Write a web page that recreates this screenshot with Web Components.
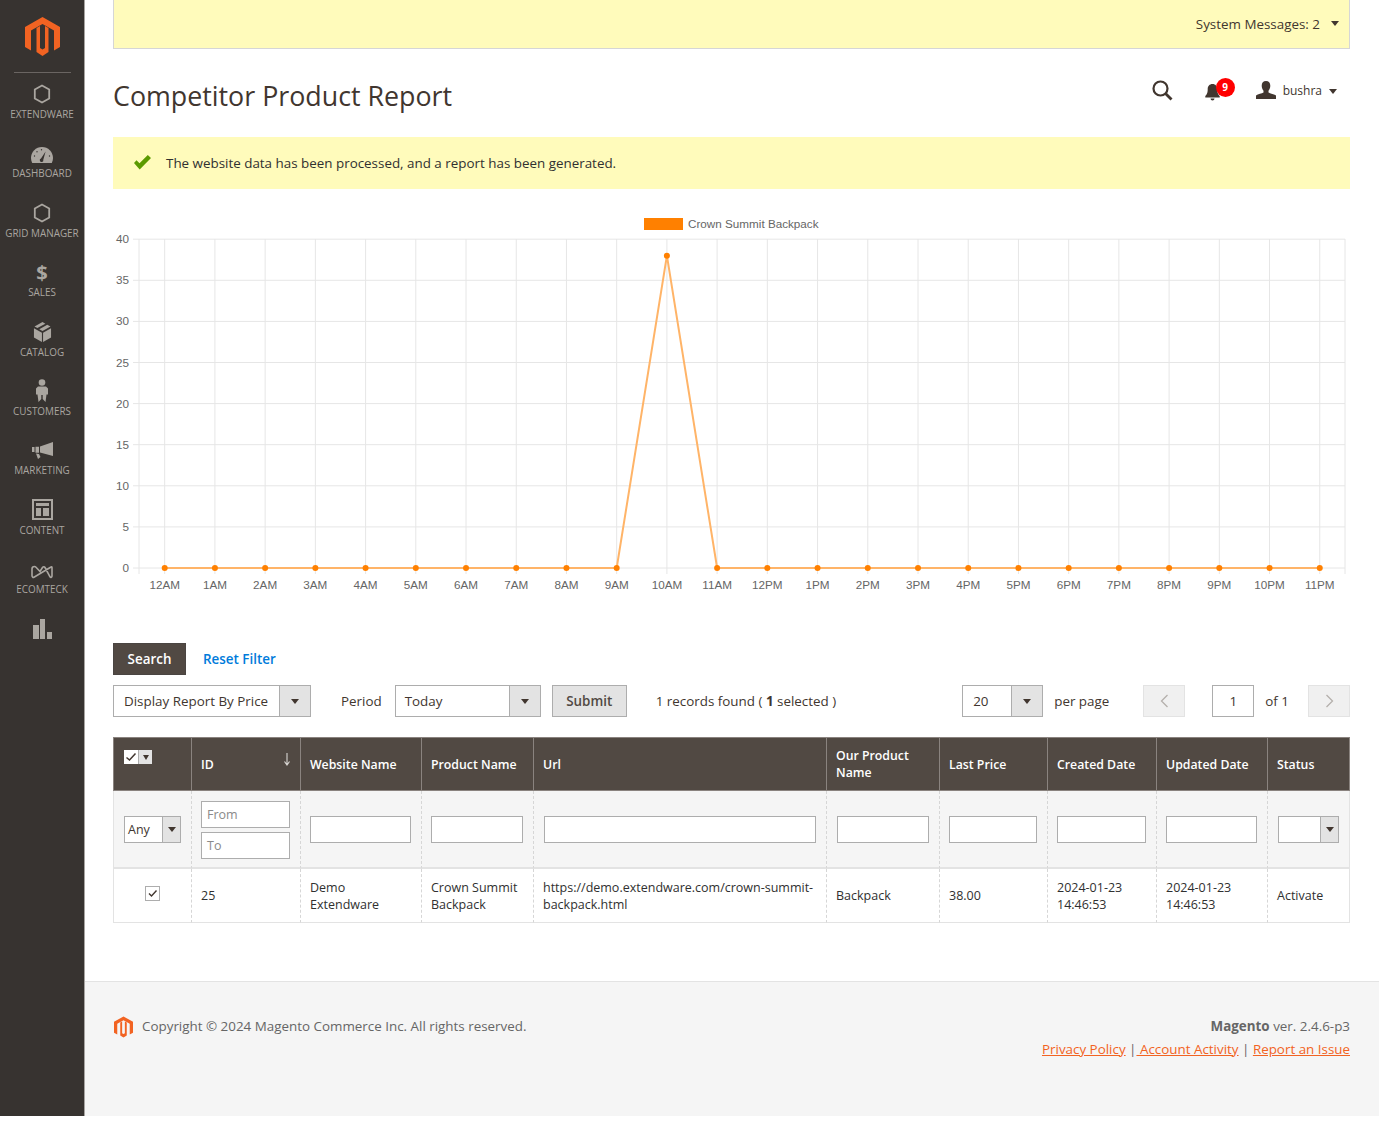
<!DOCTYPE html>
<html lang="en">
<head>
<meta charset="utf-8">
<title>Competitor Product Report</title>
<style>
html,body{margin:0;padding:0;background:#fff;}
body{width:1384px;height:1121px;overflow:hidden;font-family:"Open Sans","Liberation Sans",sans-serif;font-size:13.4px;color:#41362f;}
</style>
</head>
<body>
<ma-shell>
  <ma-sidebar slot="side">
    <ma-nav label="EXTENDWARE"><svg viewBox="0 0 20 22" width="18" height="20"><path d="M10 1.500l8 4.600v9.800l-8 4.600-8-4.600V6.100z" fill="none" stroke="currentColor" stroke-width="2"/></svg></ma-nav>
    <ma-nav label="DASHBOARD"><svg viewBox="0 0 22 16" width="22" height="16" style="margin-top:4px"><path d="M11 0C4.900 0 0 4.900 0 11c0 1.800.4 3.500 1.200 5h19.600c.8-1.500 1.200-3.200 1.200-5C22 4.900 17.100 0 11 0z" fill="currentColor"/><path d="M14.600 4.500L10 11.500a1.800 1.800 0 1 0 2.300 1.200z" fill="#373330"/><g fill="#373330"><circle cx="3.500" cy="9" r=".7"/><circle cx="6" cy="4.800" r=".7"/><circle cx="10.500" cy="2.800" r=".7"/><circle cx="18.500" cy="9" r=".7"/></g></svg></ma-nav>
    <ma-nav label="GRID MANAGER"><svg viewBox="0 0 20 22" width="18" height="20"><path d="M10 1.500l8 4.600v9.800l-8 4.600-8-4.600V6.100z" fill="none" stroke="currentColor" stroke-width="2"/></svg></ma-nav>
    <ma-nav label="SALES"><span style="font:700 20px/27px 'Open Sans',sans-serif">$</span></ma-nav>
    <ma-nav label="CATALOG"><svg viewBox="0 0 20 21" width="19" height="20"><path d="M1 6.500l8.400 4.700V21L1 16.200zM19 6.500l-8.400 4.700V21l8.400-4.800z" fill="currentColor"/><path d="M10 0l3 1.700-8.400 4.700-3-1.700zM15 2.800l3.400 1.900L10 9.500 6.600 7.600z" fill="currentColor"/></svg></ma-nav>
    <ma-nav label="CUSTOMERS"><svg viewBox="0 0 12 23" width="12" height="23"><circle cx="6" cy="3.500" r="3.300" fill="currentColor"/><path d="M2 7.500h8l2 2v6h-1.500L9.500 23 6.700 20V16H5.300v4L2.500 23l-1-7.500H0v-6z" fill="currentColor"/></svg></ma-nav>
    <ma-nav label="MARKETING"><svg viewBox="0 0 21 17" width="21" height="17"><path d="M21 0v14L8 10.500V4.500z" fill="currentColor"/><path d="M0 5h2.500v5H0zM3.500 4.700H7v6H3.500zM4 11.500l3 .6 1.500 3-2.500 1.900z" fill="currentColor"/></svg></ma-nav>
    <ma-nav label="CONTENT"><svg viewBox="0 0 21 21" width="21" height="21"><path d="M1 1h19v19H1z" fill="none" stroke="currentColor" stroke-width="2"/><path d="M4 4h13v3H4zM4 9h5v8H4zM11 9h6v8h-6z" fill="currentColor"/></svg></ma-nav>
    <ma-nav label="ECOMTECK"><svg viewBox="0 0 22 14" width="22" height="14" style="margin-top:6px"><path d="M3.500 1.500C2 1.500 1 2.500 1 4v6.500C1 12 2 12.700 3 12.300L20 2c.7-.5 1-.2 1 .7V11c0 1.200-1.200 2-2 .8L14 2.500c-.6-1.100-1.800-1.100-2.500 0L9 6.500 5 2.200c-.4-.4-.9-.7-1.500-.7z" fill="none" stroke="currentColor" stroke-width="1.600"/></svg></ma-nav>
    <ma-nav><svg viewBox="0 0 19 20" width="19" height="20"><path d="M0 6h6v14H0zM7 0h5v20H7zM14 13h5v7h-5z" fill="currentColor"/></svg></ma-nav>
  </ma-sidebar>
  <ma-sysbar>System Messages: 2</ma-sysbar>
  <ma-header user="bushra" count="9">Competitor Product Report</ma-header>
  <ma-message>The website data has been processed, and a report has been generated.</ma-message>
  <ma-chart></ma-chart>
  <ma-toolbar></ma-toolbar>
  <ma-grid></ma-grid>
  <ma-footer></ma-footer>
</ma-shell>

<script>
const LOGO = '<path d="M17.500 0L35 10v20l-6 3.500v-20L17.500 7 6 13.500v20L0 30V10z" fill="#f26322"/><path d="M11.500 11l3.500-2v22l2.500 1.500L20 31V9l3.500 2v24l-6 4-6-4z" fill="#f26322"/>';
function def(name, css, html, init){
  customElements.define(name, class extends HTMLElement{
    constructor(){super();const r=this.attachShadow({mode:'open'});
      r.innerHTML='<style>'+css+'</style>'+(typeof html==='function'?html(this):html);}
    connectedCallback(){
      const r=this.shadowRoot;
      if(typeof html==='function'&&!this._done){this._done=1;r.innerHTML='<style>'+css+'</style>'+html(this);}
      if(init)init(this,r);
    }
  });
}
def('ma-shell',`:host{display:grid;grid-template-columns:85px 1294px;width:1379px;height:1116px;}
  .side{margin:0}
  .main{display:flex;flex-direction:column;height:1116px;width:1294px;}`,
  `<div class="side"><slot name="side"></slot></div><div class="main"><slot></slot></div>`);

def('ma-sidebar',`:host{display:block;width:85px;height:1116px;box-sizing:border-box;background:#373330;border-right:1px solid #a7a4a1;}
  .logo{display:flex;justify-content:center;padding-top:17px;height:55px;box-sizing:content-box}
  hr{border:0;height:1px;background:#6a6562;margin:0 13px 7px 14px}`,
  `<div class="logo"><svg viewBox="0 0 35 39" width="35" height="39">${LOGO}</svg></div><hr><slot></slot>`);

def('ma-nav',`:host{display:block;height:59.4px;width:84px;color:#aaa6a0}
  .i{height:28px;display:flex;align-items:center;justify-content:center;}
  .l{font:400 9.9px/12px "Open Sans",sans-serif;text-align:center;white-space:nowrap;color:#aaa6a0}`,
  h=>`<div class="i"><slot></slot></div><div class="l">${h.getAttribute('label')||''}</div>`);

def('ma-sysbar',`:host{display:flex;align-items:center;justify-content:flex-end;box-sizing:border-box;width:1237px;height:49px;margin-left:28px;background:#fffbbb;border:1px solid #d6d6d6;border-top:0;padding-right:10px;padding-bottom:1px;font-size:13.4px;color:#41362f}
  i{width:0;height:0;border:4px solid transparent;border-top:5px solid #41362f;border-bottom:0;margin-left:11px}`,
  `<slot></slot><i></i>`);

def('ma-header',`:host{display:flex;align-items:center;box-sizing:border-box;width:1237px;height:88px;margin-left:28px;}
  h1{flex:1;margin:0;font:400 26.800px/34px "Open Sans",sans-serif;color:#41362f;padding-top:5px}
  .a{display:flex;align-items:center;margin-right:13px;margin-top:-6px}
  .bell{position:relative;width:15px;height:18px;margin-left:32px;margin-right:36px;top:2px}
  .badge{position:absolute;left:11px;top:-5px;width:19px;height:19px;border-radius:50%;background:#f00;color:#fff;font:700 10px/19px "Open Sans",sans-serif;text-align:center}
  .u{font-size:12px;margin-left:7px;color:#41362f}
  i{width:0;height:0;border:4px solid transparent;border-top:5px solid #41362f;border-bottom:0;margin-left:7px;margin-top:2px}`,
  h=>`<h1><slot></slot></h1><div class="a">
   <svg width="21" height="21" viewBox="0 0 21 21"><circle cx="8.500" cy="8.500" r="7" fill="none" stroke="#41362f" stroke-width="2.200"/><path d="M13.500 13.500l6 6" stroke="#41362f" stroke-width="2.800"/></svg>
   <div class="bell"><svg width="15" height="18" viewBox="0 0 15 18"><path d="M7.500 1c-3 0-4.800 2.200-4.800 5.200 0 4-1 5.300-2.400 6.800V14.500h14.400V13c-1.400-1.500-2.400-2.800-2.400-6.800C12.300 3.200 10.500 1 7.500 1z" fill="#41362f"/><path d="M5.500 15.500h4a2 2 0 0 1-4 0z" fill="#41362f"/></svg><div class="badge">${h.getAttribute('count')}</div></div>
   <svg width="20" height="18" viewBox="0 0 20 18"><path d="M10 0c2.800 0 4.300 2 4.300 4.800 0 2.200-.8 3.700-1.800 4.900v1.800c1.500 1 5.500 1.500 7.500 3V18H0v-3.500c2-1.500 6-2 7.500-3V9.700C6.500 8.500 5.700 7 5.700 4.800 5.700 2 7.200 0 10 0z" fill="#41362f"/></svg>
   <span class="u">${h.getAttribute('user')}</span><i></i></div>`);

def('ma-message',`:host{display:flex;align-items:center;box-sizing:border-box;width:1237px;height:52px;margin-left:28px;background:#fffbbb;padding-left:20px;padding-bottom:1px;color:#303030;font-size:13.4px}
  svg{margin-right:15px}`,
  `<svg width="18" height="15" viewBox="0 0 18 15"><path d="M1 8l2.500-2.800 3 3L14.800 0 18 3 6.700 14.500z" fill="#5b9a00"/></svg><slot></slot>`);

def('ma-chart',`:host{display:block;width:1237px;height:454px;margin-left:28px}
  svg{display:block}
  text{font:11.700px "Liberation Sans",Arial,sans-serif;fill:#666}`,
  ()=>{
    const x0=164.7,dx=50.22,y0=568,dy=41.1;
    const hrs=['12AM','1AM','2AM','3AM','4AM','5AM','6AM','7AM','8AM','9AM','10AM','11AM','12PM','1PM','2PM','3PM','4PM','5PM','6PM','7PM','8PM','9PM','10PM','11PM'];
    let g='';
    for(let i=0;i<=8;i++){const y=y0-i*dy;g+=`<line x1="133" x2="1345" y1="${y}" y2="${y}" stroke="#e6e6e6"/><text x="129" y="${y+4}" text-anchor="end">${i*5}</text>`;}
    g+=`<line x1="139" x2="139" y1="239" y2="574" stroke="#e6e6e6"/><line x1="1345" x2="1345" y1="239" y2="574" stroke="#e6e6e6"/>`;
    let pts=[],dots='';
    hrs.forEach((h,i)=>{const x=x0+i*dx;g+=`<line x1="${x}" x2="${x}" y1="239" y2="574" stroke="#e6e6e6"/><text x="${x}" y="589" text-anchor="middle">${h}</text>`;
      const y=i==10?y0-38*dy/5:y0;pts.push(x+','+y);dots+=`<circle cx="${x}" cy="${y}" r="3" fill="#ff8000"/>`;});
    return `<svg width="1237" height="454" viewBox="113 189 1237 454">
      <rect x="644" y="218" width="39" height="12" fill="#ff8000"/><text x="688" y="228">Crown Summit Backpack</text>
      ${g}<polyline points="${pts.join(' ')}" fill="none" stroke="#ffb468" stroke-width="2"/>${dots}</svg>`;
  });

def('ma-select',`:host{display:inline-flex;box-sizing:border-box;border:1px solid #adadad;background:#fff;height:32px;color:#41362f;font-size:13.4px}
  .t{flex:1;padding-left:var(--pl,10px);display:flex;align-items:center;white-space:nowrap;overflow:hidden}
  .a{width:var(--aw,30px);background:#e3e3e3;border-left:1px solid #adadad;display:flex;align-items:center;justify-content:center}
  i{width:0;height:0;border:4px solid transparent;border-top:5px solid #41362f;border-bottom:0;}`,
  h=>`<div class="t"><slot></slot></div><div class="a"><i></i></div>`);

def('ma-toolbar',`:host{display:block;width:1237px;margin-left:28px;color:#41362f;font-size:13.4px}
  .r{display:flex;align-items:center;height:32px}
  .r+.r{margin-top:10px}
  .s{box-sizing:border-box;width:73px;height:32px;background:#514943;color:#fff;font-weight:600;border:1px solid #4a4542;display:flex;align-items:center;justify-content:center}
  .l{color:#007bdb;font-weight:600;margin-left:17px}
  .sub{box-sizing:border-box;width:75px;height:32px;background:#e3e3e3;border:1px solid #adadad;font-weight:600;display:flex;align-items:center;justify-content:center;color:#514943;margin-left:11px}
  .nav{box-sizing:border-box;width:42px;height:32px;background:#f0f0f0;border:1px solid #e3e3e3;display:flex;align-items:center;justify-content:center}
  .n{box-sizing:border-box;width:42px;height:32px;border:1px solid #adadad;display:flex;align-items:center;justify-content:center;margin-left:27px;background:#fff}
  .grow{flex:1}`,
  `<div class="r"><div class="s">Search</div><span class="l">Reset Filter</span></div>
   <div class="r"><ma-select style="width:198px">Display Report By Price</ma-select>
    <span style="margin-left:30px;margin-right:13px">Period</span>
    <ma-select style="width:146px;--pl:9px">Today</ma-select>
    <div class="sub">Submit</div>
    <span style="margin-left:29px">1 records found ( <b>1</b> selected )</span>
    <span class="grow"></span>
    <ma-select style="width:81px">20</ma-select>
    <span style="margin-left:11px;margin-right:34px">per page</span>
    <div class="nav"><svg width="9" height="14" viewBox="0 0 9 14"><path d="M7.500 1L1.500 7l6 6" fill="none" stroke="#b5b0ac" stroke-width="1.300"/></svg></div>
    <div class="n">1</div>
    <span style="margin-left:11px;margin-right:19px">of 1</span>
    <div class="nav"><svg width="9" height="14" viewBox="0 0 9 14"><path d="M1.500 1l6 6-6 6" fill="none" stroke="#b5b0ac" stroke-width="1.300"/></svg></div>
   </div>`);

def('ma-grid',`:host{display:block;width:1237px;margin-left:28px;margin-top:20px;font-size:12.5px;color:#303030}
  table{border-collapse:separate;border-spacing:0;table-layout:fixed;width:1237px;line-height:17px;font-size:12.5px}
  th{background:#514943;color:#fff;font-weight:600;font-size:12.300px;text-align:left;height:54px;box-sizing:border-box;padding:0 9px;border-left:1px solid #8a837f;border-top:1px solid #8a837f;border-bottom:1px solid #8a837f;position:relative}
  th:last-child{border-right:1px solid #8a837f}
  td{box-sizing:border-box;padding:0 9px;border-left:1px dashed #d6d6d6;height:54px;border-bottom:1px solid #e3e3e3}
  .f td{background:#f5f5f5;height:78px;border-bottom:2px solid #e3e3e3;padding:1px 10px 0 10px}
  td:first-child{border-left:1px solid #e3e3e3}
  td:last-child{border-right:1px solid #e3e3e3}
  .in{box-sizing:border-box;height:27px;width:100%;border:1px solid #adadad;background:#fff;color:#8a8a8a;padding-left:5px;line-height:25px}
  .in+.in{margin-top:4px}
  .hc{position:absolute;left:10px;top:12px;width:28px;height:14px;display:flex;background:#fff}
  .hc b{width:14px;height:14px;background:#e3e3e3;border-left:1px solid #adadad;box-sizing:border-box;display:flex;align-items:center;justify-content:center}
  .hc i{width:0;height:0;border:3.500px solid transparent;border-top:5px solid #41362f;border-bottom:0}
  .sort{position:absolute;right:9px;top:15px;}
  .cb{box-sizing:border-box;display:block;width:15px;height:15px;border:1px solid #adadad;background:#fff;margin:-4px 0 0 22px}
  ma-select{height:27px;font-size:12.5px;--aw:17px;--pl:3px;vertical-align:middle}`,
  `<table><colgroup><col style="width:78px"><col style="width:109px"><col style="width:121px"><col style="width:112px"><col style="width:293px"><col style="width:113px"><col style="width:108px"><col style="width:109px"><col style="width:111px"><col style="width:83px"></colgroup>
  <thead><tr>
   <th><span class="hc"><svg width="14" height="14" viewBox="0 0 14 14"><path d="M2.500 7.500l3 2.500 6-6.500" fill="none" stroke="#41362f" stroke-width="1.500"/></svg><b><i></i></b></span></th>
   <th>ID<svg class="sort" width="8" height="13" viewBox="0 0 8 13"><path d="M4 0v11M1.500 8.500L4 12l2.500-3.500" fill="none" stroke="#d8d5d2" stroke-width="1.100"/></svg></th>
   <th>Website Name</th><th>Product Name</th><th>Url</th><th>Our Product Name</th><th>Last Price</th><th>Created Date</th><th>Updated Date</th><th>Status</th></tr></thead>
  <tbody><tr class="f">
   <td><ma-select style="width:57px">Any</ma-select></td>
   <td style="padding-left:9px"><div class="in">From</div><div class="in">To</div></td>
   <td style="padding-left:9px"><div class="in"></div></td><td style="padding-left:9px"><div class="in"></div></td><td><div class="in"></div></td><td><div class="in"></div></td><td style="padding-left:9px"><div class="in"></div></td><td style="padding-left:9px"><div class="in"></div></td><td style="padding-left:9px"><div class="in"></div></td>
   <td><ma-select style="width:61px"></ma-select></td></tr>
  <tr><td><span class="cb"><svg width="13" height="13" viewBox="0 0 13 13" style="display:block"><path d="M3 6.500l2.500 2.500 5-5.500" fill="none" stroke="#41362f" stroke-width="1.400"/></svg></span></td>
   <td>25</td><td>Demo Extendware</td><td>Crown Summit Backpack</td><td>https://demo.extendware.com/crown-summit-backpack.html</td><td>Backpack</td><td>38.00</td><td>2024-01-23 14:46:53</td><td>2024-01-23 14:46:53</td><td>Activate</td></tr></tbody></table>`);

def('ma-footer',`:host{display:flex;justify-content:space-between;box-sizing:border-box;width:1294px;margin-top:58px;flex:1;background:#f5f5f5;border-top:1px solid #e3e3e3;padding:34px 29px 0 28px;font-size:13.4px;color:#666;line-height:20px}
  .c{display:flex;align-items:flex-start;height:24px}
  svg{margin:0 9px 0 1px;display:block}
  .rt{text-align:right}
  a{color:#f26322;text-decoration:underline}
  .lk{margin-top:3px}`,
  `<div class="c"><svg viewBox="0 0 35 39" width="19" height="22">${LOGO}</svg><span>Copyright © 2024 Magento Commerce Inc. All rights reserved.</span></div>
   <div class="rt"><div><b>Magento</b> ver. 2.4.6-p3</div><div class="lk"><a>Privacy Policy</a> |<a>&nbsp;Account Activity</a> | <a>Report an Issue</a></div></div>`);
</script>
</body>
</html>
